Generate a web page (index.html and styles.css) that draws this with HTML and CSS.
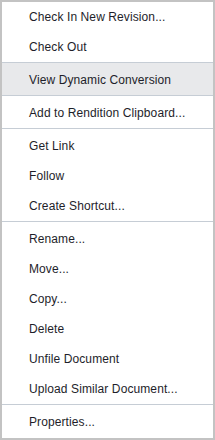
FILE: index.html
```html
<!DOCTYPE html>
<html>
<head>
<meta charset="utf-8">
<link rel="stylesheet" href="styles.css">
</head>
<body>
<div class="menu">
  <div class="item">Check In New Revision...</div>
  <div class="item">Check Out</div>
  <div class="sep"></div>
  <div class="item hover">View Dynamic Conversion</div>
  <div class="sep"></div>
  <div class="item">Add to Rendition Clipboard...</div>
  <div class="sep"></div>
  <div class="item">Get Link</div>
  <div class="item">Follow</div>
  <div class="item">Create Shortcut...</div>
  <div class="sep"></div>
  <div class="item">Rename...</div>
  <div class="item">Move...</div>
  <div class="item">Copy...</div>
  <div class="item">Delete</div>
  <div class="item">Unfile Document</div>
  <div class="item">Upload Similar Document...</div>
  <div class="sep"></div>
  <div class="item">Properties...</div>
</div>
</body>
</html>
```
FILE: styles.css
```css
html, body {
  margin: 0;
  padding: 0;
  background: #ffffff;
}
.menu {
  box-sizing: border-box;
  width: 215px;
  height: 440px;
  border: 2px solid #c3c3c3;
  background: #ffffff;
  font-family: "Liberation Sans", Arial, sans-serif;
  font-size: 12px;
  letter-spacing: 0.1px;
  color: #1e1e2a;
  display: flex;
  flex-direction: column;
}
.item {
  height: 30px;
  line-height: 30px;
  padding-left: 27px;
  white-space: nowrap;
  flex: none;
}
.sep + .item {
  padding-top: 2px;
}
.item.hover {
  background: #e8e9eb;
}
.sep {
  height: 1px;
  background: #c6cdd5;
  flex: none;
}
```
